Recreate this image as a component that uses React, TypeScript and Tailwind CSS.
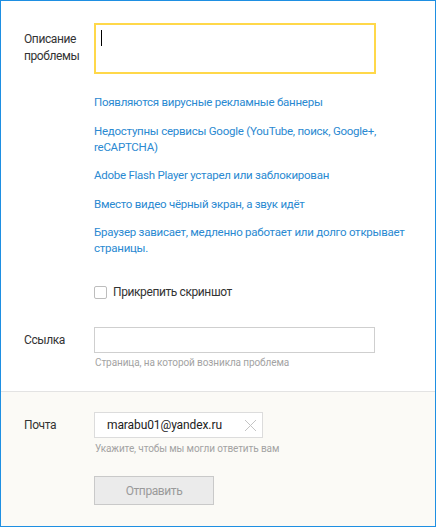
import React from "react";

const links: string[][] = [
  ["Появляются вирусные рекламные баннеры"],
  ["Недоступны сервисы Google (YouTube, поиск, Google+,", "reCAPTCHA)"],
  ["Adobe Flash Player устарел или заблокирован"],
  ["Вместо видео чёрный экран, а звук идёт"],
  ["Браузер зависает, медленно работает или долго открывает", "страницы."],
];

export default function App() {
  return (
    <div
      className="w-[436px] h-[527px] border border-[#1e8fe2] bg-white flex flex-col overflow-hidden text-[#333] text-[12px] tracking-[-0.4px]"
      style={{ fontFamily: 'Roboto, "Noto Sans", sans-serif' }}
    >
      <div className="pl-[23px] pt-[22px] pb-[21px] border-b border-[#e3e3e3]">
        <div className="flex">
          <div className="w-[70px] pt-[8px] leading-[17px]">
            Описание
            <br />
            проблемы
          </div>
          <div className="w-[282px] h-[51px] border-2 border-[#ffd84a] bg-white pl-[5px] pt-[5px]">
            <div className="w-px h-[16px] bg-black" />
          </div>
        </div>
        <div className="ml-[70px] mt-[20px] flex flex-col gap-[12.5px] text-[#2a89d1] text-[11.5px] tracking-[-0.25px] leading-[16px]">
          {links.map((l, i) => (
            <div key={i}>
              {l.map((t, j) => (
                <div key={j} className="whitespace-nowrap">
                  {t}
                </div>
              ))}
            </div>
          ))}
        </div>
        <div className="ml-[70px] mt-[28px] flex items-center gap-[6px] leading-[16px]">
          <div className="w-[13px] h-[13px] border border-[#bdbdbd] rounded-[2px] bg-white" />
          <span>Прикрепить скриншот</span>
        </div>
        <div className="mt-[27px] flex items-center">
          <div className="w-[70px]">Ссылка</div>
          <div className="w-[281px] h-[26px] border border-[#cfcfcf] bg-white" />
        </div>
        <div className="ml-[71px] mt-[3px] text-[10px] tracking-[-0.1px] leading-[14px] text-[#a3a3a3]">
          Страница, на которой возникла проблема
        </div>
      </div>
      <div className="flex-1 bg-[#fbfaf6] pl-[23px] pt-[20px]">
        <div className="flex items-center">
          <div className="w-[70px]">Почта</div>
          <div className="w-[169px] h-[26px] border border-[#dcdcdc] bg-white flex items-center pl-[12px] pr-[5px]">
            <span className="flex-1 text-[#222] whitespace-nowrap tracking-[-0.1px]">marabu01@yandex.ru</span>
            <svg width="13" height="13" viewBox="0 0 13 13" className="shrink-0">
              <path d="M1 1L12 12M12 1L1 12" stroke="#c4c4c4" strokeWidth="1" />
            </svg>
          </div>
        </div>
        <div className="ml-[71px] mt-[4px] text-[10px] tracking-[-0.1px] leading-[14px] text-[#a3a3a3]">
          Укажите, чтобы мы могли ответить вам
        </div>
        <div className="ml-[70px] mt-[20px] w-[120px] h-[29px] border border-[#c9c9c9] bg-[#ebebeb] flex items-center justify-center text-[#9a9a9a]">
          Отправить
        </div>
      </div>
    </div>
  );
}
